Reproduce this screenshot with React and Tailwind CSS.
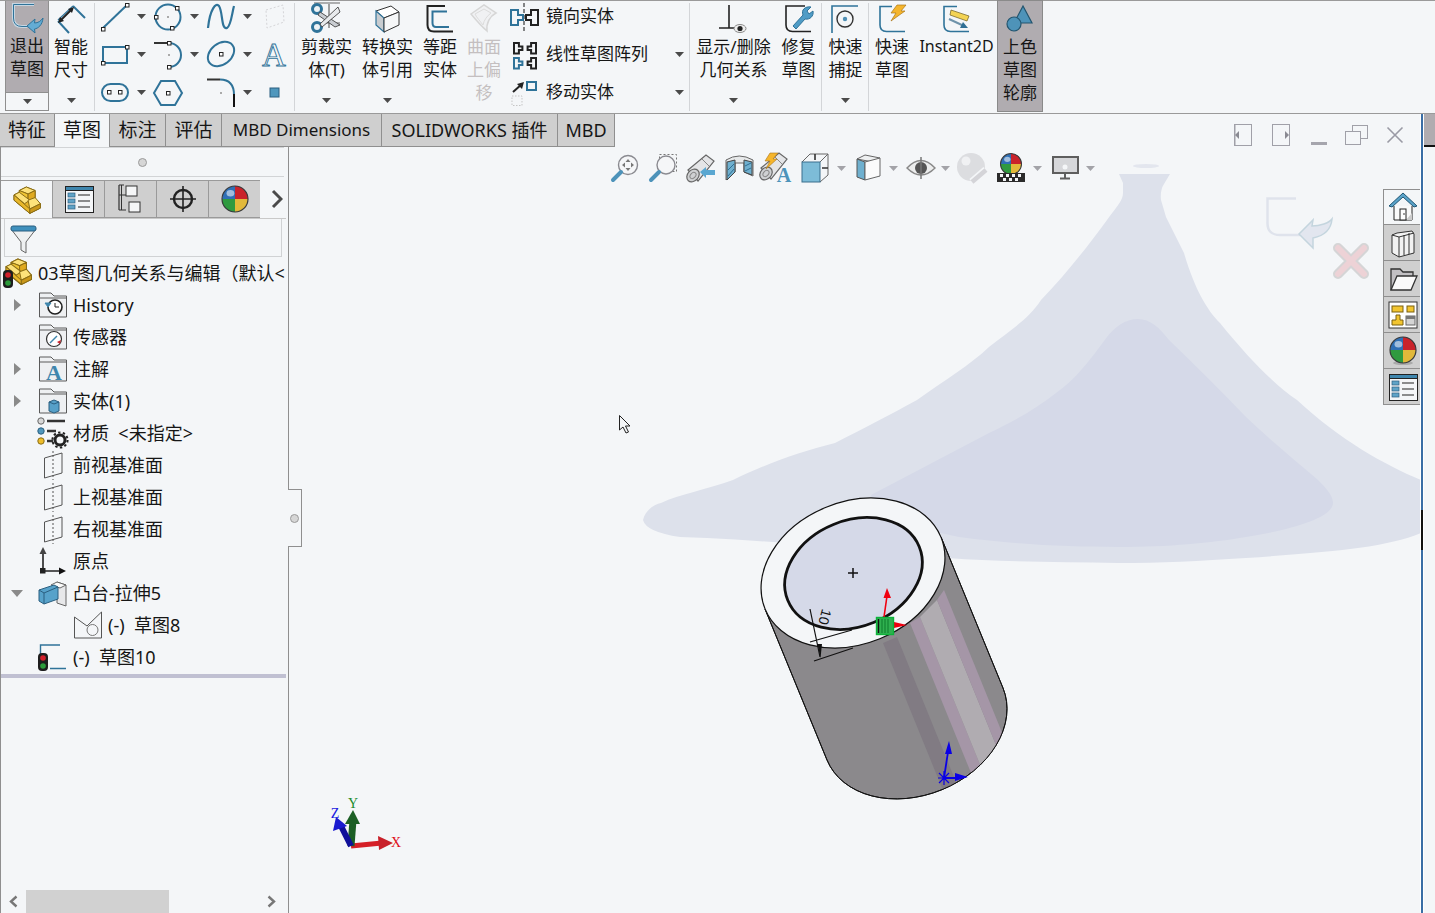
import React from "react";

const BL = "#2f7399";

const I = ({ x, y, w, h, children, className = "" }) => (
  <svg className={"block shrink-0 overflow-visible " + className} width={w} height={h} viewBox={`${x} ${y} ${w} ${h}`} fill="none">
    {children}
  </svg>
);

const H = ({ x, y }) => <rect x={x - 1.5} y={y - 1.5} width="3.5" height="3.5" fill="#fff" stroke="#222" strokeWidth="1" />;

const Caret = ({ light }) => (
  <svg className="block shrink-0" width="9" height="5" viewBox="0 0 9 5">
    <polygon points="0,0 9,0 4.5,5" fill={light ? "#a3a3a8" : "#4a4a4a"} />
  </svg>
);

const Sphere = ({ cx, cy, r }) => {
  const k = r * 0.05;
  return (
    <g>
      <circle cx={cx} cy={cy} r={r} fill="#2f6fb5" />
      <path d={`M${cx} ${cy}V${cy - r}A${r} ${r} 0 0 1 ${cx + r} ${cy}Z`} fill="#c9232b" />
      <path d={`M${cx} ${cy}H${cx + r}A${r} ${r} 0 0 1 ${cx} ${cy + r}Z`} fill="#e2b93a" />
      <path d={`M${cx} ${cy}V${cy + r}A${r} ${r} 0 0 1 ${cx - r} ${cy}Z`} fill="#2f9a3f" />
      <ellipse cx={cx - r * 0.35} cy={cy - r * 0.45} rx={r * 0.3} ry={r * 0.25} fill="#fff" opacity="0.55" />
      <circle cx={cx} cy={cy} r={r} stroke="#3a3a3a" strokeWidth={k + 0.5} />
    </g>
  );
};

const Part = ({ s = 1, tx = 0, ty = 0 }) => (
  <g transform={`translate(${tx} ${ty}) scale(${s})`} stroke="#8a6d16" strokeWidth={1 / s} strokeLinejoin="round">
    <polygon points="6,4 14,0 24,4 24,15 30,19 30,24 18,30 0,15 0,9 6,6" fill="#e5b429" />
    <polygon points="6,4 14,0 24,4 16,8" fill="#fde27a" />
    <polygon points="6,4 16,8 16,15 6,10" fill="#f0c534" />
    <polygon points="16,8 24,4 24,15 16,15" fill="#e0aa20" />
    <polygon points="0,9 6,6 18,15 12,19" fill="#fde27a" />
    <polygon points="16,15 24,12 30,19 18,25" fill="#fde27a" />
    <polygon points="0,9 18,25 18,30 0,15" fill="#e8b72a" />
    <polygon points="18,25 30,19 30,24 18,30" fill="#c9971a" />
  </g>
);

const Light = ({ x, y }) => (
  <g>
    <rect x={x} y={y} width="10" height="18" rx="4" fill="#1d1d1d" />
    <circle cx={x + 5} cy={y + 5} r="2.8" fill="#d21f2b" />
    <circle cx={x + 5} cy={y + 13} r="2.8" fill="#2c9a3a" />
  </g>
);

const Folder = ({ x, y, children }) => (
  <>
    <path d={`M${x + .5} ${y + 25}V${y + 1}H${x + 12}L${x + 15} ${y + 4}H${x + 27.5}V${y + 25}Z`} fill="#eef0f2" stroke="#5a5a5a" />
    <path d={`M${x + .5} ${y + 6}H${x + 27.5}`} stroke="#5a5a5a" />
    {children}
  </>
);

const ListIcon = ({ x, y, w = 28, h = 26 }) => (
  <g>
    <rect x={x + .5} y={y + .5} width={w} height={h} fill="#f4f6f8" stroke="#222" />
    <rect x={x + .5} y={y + .5} width={w} height="4" fill="#3f86ad" stroke="#222" />
    {[8, 14, 20].map((d) => (
      <g key={d}>
        <rect x={x + 3} y={y + d - 1} width="7" height="4" fill="#5fa3c7" stroke="#2f5f80" strokeWidth=".7" />
        <path d={`M${x + 13} ${y + d + 1}H${x + w - 3}`} stroke="#222" />
      </g>
    ))}
  </g>
);

const Plane = ({ y }) => (
  <I x={38} y={y} w={30} h={32}>
    <polygon points={`44.5,${y + 9} 62,${y + 4} 62,${y + 24} 44.5,${y + 29}`} fill="none" stroke="#555" />
    <path d={`M53 ${y + 2}V${y + 31}`} stroke="#555" strokeDasharray="2 2" />
  </I>
);

/* ---------- ribbon ---------- */

const RibbonBtn = ({ w, icon, lines, caret, disabled, active, small }) => (
  <div className={`flex h-[110px] flex-col items-center ${w} ${active ? "bg-[#b0acb0] outline outline-1 outline-[#8a8a8a]" : ""}`}>
    <div className="h-[34px] w-full shrink-0">{icon}</div>
    {lines.map((t) => (
      <div key={t} className={`whitespace-nowrap leading-[23px] ${small ? "text-[16px]" : "text-[17px]"} ${disabled ? "text-[#c4bfc0]" : "text-[#161616]"}`}>{t}</div>
    ))}
    {caret && <div className="mb-[8px] mt-auto"><Caret /></div>}
  </div>
);

const Sep = ({ className = "" }) => <div className={`my-[2px] h-[108px] w-px shrink-0 bg-[#d3d5d8] ${className}`} />;

const Cell = ({ children, caret }) => (
  <div className="flex h-[30px] items-center">
    {children}
    {caret && <div className="ml-[4px]"><Caret /></div>}
  </div>
);

const SketchGrid = () => (
  <div className="ml-[2px] grid w-[197px] shrink-0 grid-cols-[53px_53px_53px_38px] gap-y-[8px]">
    <Cell caret><I x={97} y={0} w={36} h={30}>
      <path d="M103 27L127 4" stroke={BL} strokeWidth="2" /><H x={103} y={28} /><H x={127} y={4} />
    </I></Cell>
    <Cell caret><I x={150} y={0} w={36} h={30}>
      <circle cx="168" cy="16" r="12.5" stroke={BL} strokeWidth="2" /><H x={156} y={16} /><H x={177} y={7} /><H x={172} y={27} />
      <path d="M167 15l2 2m0-2l-2 2" stroke="#aaa" />
    </I></Cell>
    <Cell caret><I x={203} y={0} w={36} h={30}>
      <path d="M208 27C210 8 216 1 219 5C223 11 221 29 227 27C231 25 232 12 234 5" stroke={BL} strokeWidth="2.2" />
    </I></Cell>
    <Cell><I x={256} y={0} w={36} h={30}>
      <polygon points="266,9 283,4 284,21 267,27" stroke="#d5d5d8" strokeDasharray="2 2" />
    </I></Cell>

    <Cell caret><I x={97} y={38} w={36} h={30}>
      <rect x="103" y="46" width="24" height="16" stroke={BL} strokeWidth="2" /><H x={127} y={46} /><H x={103} y={62} />
    </I></Cell>
    <Cell caret><I x={150} y={38} w={36} h={30}>
      <path d="M154 42H169" stroke="#333" strokeWidth="2" /><path d="M169 42A12 12 0 0 1 169 66" stroke={BL} strokeWidth="2" />
      <H x={169} y={42} /><H x={169} y={66} /><path d="M168 53l2 2m0-2l-2 2" stroke="#aaa" />
    </I></Cell>
    <Cell caret><I x={203} y={38} w={36} h={30}>
      <ellipse cx="221" cy="53" rx="14.5" ry="10.5" transform="rotate(-38 221 53)" stroke={BL} strokeWidth="2" /><H x={221} y={53} />
    </I></Cell>
    <Cell><I x={256} y={38} w={36} h={30}>
      <text x="274" y="65" textAnchor="middle" fontSize="33" fontFamily="'Liberation Serif',serif" fill="#f4f6f8" stroke={BL} strokeWidth=".9">A</text>
    </I></Cell>

    <Cell caret><I x={97} y={76} w={36} h={30}>
      <rect x="102" y="83" width="26" height="17" rx="8.5" stroke={BL} strokeWidth="2" /><H x={109} y={91} /><H x={120} y={91} />
    </I></Cell>
    <Cell><I x={150} y={76} w={36} h={30}>
      <polygon points="161,80 175,80 182,92 175,104 161,104 154,92" stroke={BL} strokeWidth="2" /><H x={168} y={92} />
    </I></Cell>
    <Cell caret><I x={203} y={76} w={36} h={30}>
      <path d="M207 78.5H220" stroke="#333" strokeWidth="2" /><path d="M220 78.5Q234 78.5 234 94" stroke={BL} strokeWidth="2" /><path d="M234 93V106" stroke="#111" strokeWidth="2" />
      <path d="M220 91l2 2m0-2l-2 2" stroke="#aaa" />
    </I></Cell>
    <Cell><I x={256} y={76} w={36} h={30}>
      <rect x="270" y="87" width="9" height="9" fill="#4f97bd" stroke="#2b5f80" />
    </I></Cell>
  </div>
);

const StackRow = ({ icon, label, caret }) => (
  <div className="flex h-[30px] items-center">
    <div className="w-[38px] shrink-0">{icon}</div>
    <div className="whitespace-nowrap text-[17px] leading-[30px] text-[#161616]">{label}</div>
    {caret && <div className="ml-auto mr-[5px]"><Caret /></div>}
  </div>
);

const bracket = (o, d, y, c, k = 1) => (
  <polygon
    points={`${o},${y} ${o + d * 7 * k},${y} ${o + d * 7 * k},${y + 5 * k} ${o + d * 12 * k},${y + 5 * k} ${o + d * 12 * k},${y + 10 * k} ${o + d * 7 * k},${y + 10 * k} ${o + d * 7 * k},${y + 15 * k} ${o},${y + 15 * k}`}
    stroke={c} strokeWidth="2" fill="#f4f6f8"
  />
);

const Ribbon = () => (
  <div className="flex h-[114px] shrink-0 items-start border-y border-[#9a9a9a] bg-[#f4f6f8] pl-[5px]">
    {/* exit */}
    <div className="h-[110px] w-[44px] shrink-0 border border-t-0 border-[#8f8f8f]">
      <div className="flex h-[91px] flex-col items-center bg-[#b0acb0]">
        <div className="h-[33px]">
          <I x={6} y={1} w={42} h={33}>
            <path d="M34 4.5H13.5V18Q13.5 26.5 22 26.5H27" stroke="#c6d6e2" strokeWidth="3" />
            <path d="M34 4.5H13.5V18Q13.5 26.5 22 26.5H27" stroke={BL} strokeWidth="1" />
            <path d="M27 26L35 19L34.5 23C38 23 41 21 43 18C42.5 25 38 28.5 34.5 29L35 33Z" fill="#63acd4" stroke={BL} />
          </I>
        </div>
        <div className="text-[17px] leading-[23px] text-[#161616]">退出</div>
        <div className="text-[17px] leading-[23px] text-[#161616]">草图</div>
      </div>
      <div className="flex h-[18px] items-center justify-center border-t border-[#8f8f8f]"><Caret /></div>
    </div>
    <div>
      <RibbonBtn w="w-[44px]" lines={["智能", "尺寸"]} caret icon={
        <I x={49} y={0} w={44} h={34}>
          <path d="M73 5L85 17" stroke={BL} strokeWidth="2" /><path d="M58 20L69 32" stroke={BL} strokeWidth="2" />
          <path d="M58 19L73 5" stroke={BL} strokeWidth="1.2" />
          <path d="M61 19L71 9" stroke="#222" strokeWidth="2" /><polygon points="58,22 64,20 60,16" fill="#222" /><polygon points="74,6 68,8 72,12" fill="#222" />
        </I>
      } />
    </div>
    <Sep className="ml-px" />
    <SketchGrid />
    <Sep />
    <div className="ml-[3px]">
      <RibbonBtn w="w-[57px]" lines={["剪裁实", "体(T)"]} caret icon={
        <I x={298} y={0} w={57} h={34}>
          <path d="M314 2H340M329 3V27M315 22H340" stroke="#666" strokeWidth="1.2" />
          <circle cx="317" cy="8" r="4.5" fill="#eef3f6" stroke={BL} strokeWidth="3" />
          <circle cx="317" cy="26" r="4.5" fill="#eef3f6" stroke={BL} strokeWidth="3" />
          <polygon points="320,11 340,24 335,26 318,14" fill="#c9cdd2" stroke="#444" strokeWidth=".9" />
          <polygon points="320,23 338,6 340,11 322,26" fill="#e8eaec" stroke="#444" strokeWidth=".9" />
        </I>
      } />
    </div>
    <div className="ml-[4px]">
      <RibbonBtn w="w-[57px]" lines={["转换实", "体引用"]} caret icon={
        <I x={359} y={0} w={57} h={34}>
          <polygon points="376,10 391,5 399,11 384,17" fill="#fff" stroke="#333" />
          <polygon points="376,10 384,17 384,31 376,24" fill="#c8ccd0" stroke={BL} strokeWidth="1.2" />
          <polygon points="384,17 399,11 399,24 384,31" fill="#f6f7f8" stroke="#333" />
        </I>
      } />
    </div>
    <div className="ml-[4px]">
      <RibbonBtn w="w-[40px]" lines={["等距", "实体"]} icon={
        <I x={420} y={0} w={40} h={34}>
          <path d="M445 5H427.5V24Q427.5 30.5 434 30.5H453" stroke="#222" strokeWidth="2" />
          <path d="M447 10.5H432.5V22Q432.5 26 436 26H449" stroke={BL} strokeWidth="2" />
        </I>
      } />
    </div>
    <div className="ml-[3px]">
      <RibbonBtn w="w-[42px]" disabled lines={["曲面", "上偏", "移"]} icon={
        <I x={463} y={0} w={42} h={34}>
          <path d="M471 13L484 4L496 12C490 15 486 22 487 30C481 25 476 19 471 13Z" stroke="#d6d6d6" strokeWidth="1.5" fill="#f0f1f3" />
          <path d="M475 13L484 8L491 12C487 15 484 19 483 24C480 20 477 17 475 13Z" stroke="#dcdcdc" />
        </I>
      } />
    </div>
    <div className="ml-[3px] flex w-[181px] shrink-0 flex-col gap-y-[8px]">
      <StackRow label="镜向实体" icon={
        <I x={508} y={0} w={38} h={30}>
          <path d="M524 2V31" stroke="#111" strokeDasharray="4 2" />
          {bracket(511, 1, 9, BL)}{bracket(538, -1, 9, "#222")}
        </I>
      } />
      <StackRow label="线性草图阵列" caret icon={
        <I x={508} y={38} w={38} h={30}>
          {bracket(514, 1, 42, "#222", 0.7)}
          {bracket(536, -1, 42, "#222", 0.7)}
          {bracket(514, 1, 57, BL, 0.7)}
          {bracket(536, -1, 57, "#222", 0.7)}
        </I>
      } />
      <StackRow label="移动实体" caret icon={
        <I x={508} y={76} w={38} h={30}>
          <path d="M513 91L522 83" stroke="#222" strokeWidth="2" /><polygon points="524,81 517,83 522,88" fill="#222" />
          <rect x="527" y="81" width="9" height="8" stroke={BL} strokeWidth="2" />
          <rect x="512" y="95" width="10" height="9.5" stroke="#c5c5c5" strokeDasharray="1.5 1.5" />
        </I>
      } />
    </div>
    <Sep />
    <div className="ml-[2px]">
      <RibbonBtn w="w-[83px]" lines={["显示/删除", "几何关系"]} caret icon={
        <I x={692} y={0} w={83} h={34}>
          <path d="M729 4V27M719 27H739" stroke="#222" strokeWidth="1.6" />
          <ellipse cx="740" cy="27.5" rx="6" ry="4" fill="#eee" stroke="#888" /><circle cx="740" cy="27.5" r="2.6" fill="#222" />
        </I>
      } />
    </div>
    <div className="ml-[2px]">
      <RibbonBtn w="w-[43px]" lines={["修复", "草图"]} icon={
        <I x={777} y={0} w={43} h={34}>
          <path d="M805 5H786V24Q786 30.5 792.5 30.5H811" stroke="#222" strokeWidth="1.6" />
          <path d="M793 25L803 14C801 9 805 5 811 6L807 10L809 13L813 10C814 15 810 19 805 18L796 28Z" fill="#4f9cc6" stroke={BL} />
        </I>
      } />
    </div>
    <Sep className="ml-px" />
    <div className="ml-[2px]">
      <RibbonBtn w="w-[43px]" lines={["快速", "捕捉"]} caret icon={
        <I x={824} y={0} w={43} h={34}>
          <path d="M832 32V5H858" stroke={BL} strokeWidth="1.6" />
          <circle cx="845" cy="18" r="8" stroke="#333" strokeWidth="1.4" /><circle cx="845" cy="18" r="2.2" fill="#4f8fb5" />
        </I>
      } />
    </div>
    <Sep className="ml-px" />
    <div className="ml-[1px]">
      <RibbonBtn w="w-[44px]" lines={["快速", "草图"]} icon={
        <I x={870} y={0} w={44} h={34}>
          <path d="M892 5.5H880V24Q880 30.5 886.5 30.5H905" stroke={BL} strokeWidth="1.6" />
          <polygon points="897,4 906,4 901,10 905,10 891,20 896,12 891,12" fill="#f5b52c" stroke="#a9751b" strokeWidth=".7" />
        </I>
      } />
    </div>
    <div className="ml-[3px]">
      <RibbonBtn w="w-[79px]" small lines={["Instant2D"]} icon={
        <I x={917} y={0} w={79} h={34}>
          <path d="M957 5.5H944V24Q944 30.5 950.5 30.5H969" stroke={BL} strokeWidth="1.6" />
          <polygon points="951,9 969,15 967,20 950,14" fill="#f3d354" stroke="#6b5c20" strokeWidth=".7" />
          <path d="M949 18L964 25" stroke="#6f93aa" strokeWidth="2" /><polygon points="968,27 960,27 963,21" fill="#2f6f94" />
        </I>
      } />
    </div>
    <div className="ml-[2px]">
      <RibbonBtn w="w-[44px]" active lines={["上色", "草图", "轮廓"]} icon={
        <I x={998} y={0} w={44} h={34}>
          <polygon points="1023,5 1032,22 1014,22" fill="#4e93b9" stroke="#23556f" strokeWidth="1.2" />
          <circle cx="1014" cy="23" r="7" fill="#4e93b9" stroke="#23556f" strokeWidth="1.2" />
        </I>
      } />
    </div>
  </div>
);

/* ---------- tabs ---------- */

const Tab = ({ w, children, active }) => (
  <div className={`flex h-full shrink-0 items-center justify-center whitespace-nowrap border-r border-[#8f8f8f] text-[#161616] ${w} ${active ? "bg-[#f4f6f8]" : "border-b bg-[#cfcfcf]"}`}>
    {children}
  </div>
);

const TabRow = () => (
  <div className="flex h-[33px] shrink-0 items-center bg-[#f4f6f8]">
    <Tab w="w-[55px] text-[19px]">特征</Tab>
    <Tab w="w-[55px] text-[19px]" active>草图</Tab>
    <Tab w="w-[56px] text-[19px]">标注</Tab>
    <Tab w="w-[56px] text-[19px]">评估</Tab>
    <Tab w="w-[160px] text-[17px]">MBD Dimensions</Tab>
    <Tab w="w-[176px] text-[18px]">SOLIDWORKS 插件</Tab>
    <Tab w="w-[57px] text-[18px]">MBD</Tab>
    <div className="ml-[619px] mt-[9px]">
      <I x={1234} y={124} w={18} h={22}>
        <rect x="1234.5" y="124.5" width="17" height="21" stroke="#a0a0a8" /><path d="M1235 124V146" stroke="#a0a0a8" /><polygon points="1239,131 1239,139 1235,135" fill="#8a8a92" />
      </I>
    </div>
    <div className="ml-[20px] mt-[9px]">
      <I x={1272} y={124} w={18} h={22}>
        <rect x="1272.5" y="124.5" width="17" height="21" stroke="#a0a0a8" /><polygon points="1285,131 1285,139 1289,135" fill="#8a8a92" />
      </I>
    </div>
    <div className="ml-[21px] mt-[26px] h-[3px] w-[16px] bg-[#a5a5ad]" />
    <div className="ml-[18px] mt-[9px]">
      <I x={1345} y={125} w={23} h={20}>
        <rect x="1352.5" y="125.5" width="15" height="13" stroke="#a0a0a8" /><rect x="1345.5" y="131.5" width="15" height="13" fill="#f4f6f8" stroke="#a0a0a8" />
      </I>
    </div>
    <div className="ml-[19px] mt-[9px]">
      <I x={1387} y={127} w={16} h={16}>
        <path d="M1387.5 127.5L1402.5 142.5M1402.5 127.5L1387.5 142.5" stroke="#9a9aa5" strokeWidth="1.6" />
      </I>
    </div>
    <div className="ml-auto h-full w-[11px] border-b-2 border-[#111] bg-[#b0acb0]" />
  </div>
);

/* ---------- feature manager ---------- */

const PTab = ({ active, children, w = "w-[52px]" }) => (
  <div className={`flex h-[38px] shrink-0 items-center justify-center border-t border-[#9a9a9a] ${w} ${active ? "bg-[#f4f6f8]" : "border-b border-l bg-[#cfcfcf]"}`}>
    {children}
  </div>
);

const Row = ({ arrow, icon, label }) => (
  <div className="flex h-[32px] items-center whitespace-nowrap text-[18px] text-[#161616]">
    <div className="flex w-[37px] shrink-0 justify-center pr-[5px]">
      {arrow === "r" && <svg width="7" height="12" viewBox="0 0 7 12"><polygon points="0,0 7,6 0,12" fill="#8a8a8a" /></svg>}
      {arrow === "d" && <svg width="12" height="7" viewBox="0 0 12 7"><polygon points="0,0 12,0 6,7" fill="#8a8a8a" /></svg>}
    </div>
    <div className="w-[35px] shrink-0">{icon}</div>
    <span>{label}</span>
  </div>
);

const TreeIcon = ({ y, children }) => <I x={38} y={y} w={30} h={32}>{children}</I>;

const Tree = () => (
  <div className="flex flex-col">
    <div className="flex h-[32px] items-center overflow-hidden whitespace-nowrap text-[18px] text-[#161616]">
      <div className="w-[36px] shrink-0">
        <I x={1} y={257} w={36} h={32}>
          <Part s={0.85} tx={6} ty={259} />
          <Light x={3} y={270} />
        </I>
      </div>
      <span className="ml-px">03草图几何关系与编辑（默认&lt;</span>
    </div>
    <Row arrow="r" label="History" icon={
      <TreeIcon y={289}>
        <Folder x={39} y={292}>
          <circle cx="55" cy="307" r="7" fill="#fff" stroke="#222" strokeWidth="1.6" />
          <path d="M55 303V307H59" stroke="#222" /><path d="M48 307L45 303L51 303Z" fill="#3f86ad" stroke="#3f86ad" />
        </Folder>
      </TreeIcon>
    } />
    <Row label="传感器" icon={
      <TreeIcon y={321}>
        <Folder x={39} y={324}>
          <circle cx="54" cy="339" r="7.5" fill="#fff" stroke="#333" strokeWidth="1.2" />
          <path d="M50 343L57 336" stroke="#3f86ad" strokeWidth="1.5" /><path d="M57 342L61 340L60 344Z" fill="#c9232b" />
        </Folder>
      </TreeIcon>
    } />
    <Row arrow="r" label="注解" icon={
      <TreeIcon y={353}>
        <Folder x={39} y={356}>
          <text x="54" y="380" textAnchor="middle" fontSize="22" fontWeight="700" fontFamily="'Liberation Serif',serif" fill="#3f86ad">A</text>
        </Folder>
      </TreeIcon>
    } />
    <Row arrow="r" label="实体(1)" icon={
      <TreeIcon y={385}>
        <Folder x={39} y={388}>
          <path d="M49 402L54 400L59 402V411L54 413L49 411Z" fill="#56a0c8" stroke="#2b5f80" /><path d="M49 402L54 404L59 402" stroke="#2b5f80" />
        </Folder>
      </TreeIcon>
    } />
    <Row label={"材质\u00A0 <未指定>"} icon={
      <TreeIcon y={417}>
        <circle cx="41" cy="421" r="3.2" fill="#d7d7d7" stroke="#666" />
        <circle cx="41" cy="431" r="3.2" fill="#4f97bd" stroke="#2b5f80" />
        <circle cx="41" cy="441" r="3.2" fill="#eebd2a" stroke="#8a6d16" />
        <path d="M47 421H65M47 431H56M47 441H53" stroke="#333" strokeWidth="2.4" />
        <circle cx="60" cy="440" r="5" fill="#f4f6f8" stroke="#222" strokeWidth="3" />
        <circle cx="60" cy="440" r="7.6" stroke="#222" strokeWidth="2" strokeDasharray="2.4 2.4" />
      </TreeIcon>
    } />
    <Row label="前视基准面" icon={<Plane y={449} />} />
    <Row label="上视基准面" icon={<Plane y={481} />} />
    <Row label="右视基准面" icon={<Plane y={513} />} />
    <Row label="原点" icon={
      <TreeIcon y={545}>
        <path d="M43 571V552M43 571H62" stroke="#222" strokeWidth="1.6" />
        <polygon points="43,547 39.5,554 46.5,554" fill="#444" /><polygon points="66,571 59,567.5 59,574.5" fill="#111" />
        <rect x="40" y="568" width="5.5" height="5.5" fill="#222" />
      </TreeIcon>
    } />
    <Row arrow="d" label="凸台-拉伸5" icon={
      <TreeIcon y={577}>
        <polygon points="57,582 66,585 66,606 57,603" fill="#e7e8ea" stroke="#666" />
        <polygon points="51,585 57,582 66,585 60,588" fill="#fafafa" stroke="#666" />
        <polygon points="39,590 54,585 58,587 58,599 44,604 39,601" fill="#57a2ca" stroke="#2b5f80" />
        <path d="M39 590L44 593L58 587M44 593V604" stroke="#2b5f80" />
      </TreeIcon>
    } />
    <div className="flex h-[32px] items-center whitespace-nowrap text-[18px] text-[#161616]">
      <div className="ml-[73px] w-[34px] shrink-0">
        <I x={74} y={609} w={34} h={32}>
          <path d="M74.5 617L87 626L101.5 612V638H74.5Z" stroke="#555" /><circle cx="92.5" cy="630" r="5.5" stroke="#777" />
        </I>
      </div>
      <span>{"(-)\u00A0 草图8"}</span>
    </div>
    <Row label={"(-)\u00A0 草图10"} icon={
      <TreeIcon y={641}>
        <path d="M60 645H40.5V655M50 668.5H66" stroke={BL} strokeWidth="1.4" />
        <Light x={38} y={653} />
      </TreeIcon>
    } />
    <div className="mt-px h-[4px] w-[285px] bg-[#c0c0d2]" />
  </div>
);

const LeftPanel = () => (
  <div className="relative flex w-[289px] shrink-0 flex-col border-x border-[#8f8f8f] bg-[#f4f6f8]">
    <div className="mr-[4px] flex h-[30px] shrink-0 items-center justify-center border-y border-[#d2d4d6]">
      <div className="h-[9px] w-[9px] rounded-full border border-[#9a9a9a] bg-[#d6d6d6]" />
    </div>
    <div className="mr-[2px] mt-[3px] flex h-[39px] shrink-0 items-start border-b border-[#c9c9c9]">
      <PTab active w="w-[51px]">
        <I x={0} y={0} w={30} h={30}><Part s={0.88} tx={2} ty={2} /></I>
      </PTab>
      <PTab><I x={0} y={0} w={30} h={30}><ListIcon x={1} y={2} /></I></PTab>
      <PTab>
        <I x={0} y={0} w={30} h={30}>
          <path d="M3 1H8M3 1V26M3 11H10M3 26H10" stroke="#333" strokeWidth="1.2" />
          <path d="M5.5 1V26" stroke="#333" />
          <rect x="10" y="2" width="11" height="10" fill="#f5f6f7" stroke="#333" />
          <rect x="13" y="18" width="11" height="10" fill="#f5f6f7" stroke="#333" />
        </I>
      </PTab>
      <PTab>
        <I x={0} y={0} w={30} h={30}>
          <circle cx="15" cy="15" r="9" stroke="#222" strokeWidth="2.4" />
          <path d="M15 2V28M2 15H28" stroke="#222" strokeWidth="1.6" />
        </I>
      </PTab>
      <PTab><I x={0} y={0} w={30} h={30}><Sphere cx={15} cy={15} r={13} /></I></PTab>
      <div className="ml-[11px] mt-[9px]">
        <svg width="12" height="20" viewBox="0 0 12 20"><path d="M2 2L10 10L2 18" stroke="#4a4a4a" strokeWidth="3" fill="none" /></svg>
      </div>
    </div>
    <div className="mx-[3px] h-[38px] w-[278px] shrink-0 border border-t-0 border-[#d0d2d4] pl-[5px] pt-[6px]">
      <I x={0} y={0} w={28} h={30}>
        <path d="M1 4H26L16 17V28L11 25V17Z" fill="#eef0f1" stroke="#666" />
        <rect x="1" y="1" width="25" height="5" rx="2" fill="#3f90bd" stroke="#2b5f80" />
      </I>
    </div>
    <Tree />
    <div className="mt-auto flex h-[23px] shrink-0 items-center">
      <div className="flex w-[25px] justify-center">
        <svg width="9" height="13" viewBox="0 0 9 13"><path d="M7.5 1.5L2 6.5L7.5 11.5" stroke="#777" strokeWidth="2.4" fill="none" /></svg>
      </div>
      <div className="h-full w-[143px] bg-[#d1d1d1]" />
      <div className="ml-[98px] flex w-[9px]">
        <svg width="9" height="13" viewBox="0 0 9 13"><path d="M1.5 1.5L7 6.5L1.5 11.5" stroke="#777" strokeWidth="2.4" fill="none" /></svg>
      </div>
    </div>
  </div>
);

/* ---------- viewport ---------- */

const VB = ({ cx, ml, children }) => (
  <div className={ml}>
    <I x={cx - 18} y={152} w={36} h={32}>{children}</I>
  </div>
);

const Binocular = () => (
  <g>
    <polygon points="688,170 706,155 714,161 698,181" fill="#e4e5e7" stroke="#666" strokeWidth="1.2" />
    <path d="M702 159L709 166" stroke="#888" />
    <ellipse cx="693" cy="175.5" rx="5.5" ry="7" transform="rotate(42 693 175.5)" fill="#cfd1d3" stroke="#666" strokeWidth="1.2" />
    <ellipse cx="693" cy="175.5" rx="2.5" ry="3.5" transform="rotate(42 693 175.5)" stroke="#888" />
  </g>
);

const ViewToolbar = () => (
  <div className="absolute left-[318px] top-[5px] flex items-center">
    <VB cx={625}>
      <circle cx="628" cy="165" r="9.5" fill="#f5f6f8" stroke="#8a8a90" strokeWidth="1.4" />
      <path d="M621 172L613 180" stroke="#4d93ba" strokeWidth="4" strokeLinecap="round" />
      <path d="M628 159l2.5 3h-5zM628 171l2.5-3h-5zM622 165l3-2.5v5zM634 165l-3-2.5v5z" fill="#777" />
    </VB>
    <VB cx={663} ml="ml-[2px]">
      <rect x="659.5" y="154.5" width="17" height="17" stroke="#777" strokeDasharray="2 2" />
      <circle cx="666" cy="165" r="9" fill="#f5f6f8" stroke="#8a8a90" strokeWidth="1.4" />
      <path d="M659 172L651 180" stroke="#4d93ba" strokeWidth="4" strokeLinecap="round" />
    </VB>
    <VB cx={702} ml="ml-[3px]">
      <Binocular />
      <polygon points="700,172 706,167 706,170 715,170 715,175 706,175 706,178" fill="#5aa7d1" />
    </VB>
    <VB cx={739} ml="ml-px">
      <path d="M726 160Q739 152 753 160V176L744 172V163H735V172L726 180Z" fill="#e7e9ea" stroke="#666" />
      <polygon points="727,162 735,160 735,172 727,180" fill="#6fb0cf" stroke="#444" />
      <polygon points="744,160 752,162 752,175 744,172" fill="#6fb0cf" stroke="#444" />
      <path d="M728 170L734 164M728 176L734 169M745 166L751 163M745 171L751 168" stroke="#2f6f94" />
    </VB>
    <VB cx={777} ml="ml-[2px]">
      <g transform="translate(73 -2)"><Binocular /></g>
      <polygon points="770,153 778,153 773,159 777,159 766,169 770,161 765,161" fill="#f5b52c" stroke="#a9751b" strokeWidth=".6" />
      <text x="784" y="182" textAnchor="middle" fontSize="20" fontWeight="700" fontFamily="'Liberation Serif',serif" fill="#4d93ba">A</text>
    </VB>
    <VB cx={815} ml="ml-[2px]">
      <path d="M802 162L810 154H828V175L820 182" stroke="#666" /><path d="M820 162L828 154" stroke="#666" />
      <rect x="802" y="162" width="18" height="20" fill="#7dbcd8" stroke="#3b6f8d" />
      <path d="M815 154V160M828 168H822" stroke="#333" strokeWidth="1.6" />
    </VB>
    <div className="ml-[4px]"><Caret light /></div>
    <VB cx={868} ml="ml-[4px]">
      <polygon points="857,159 865,155 880,158 873,162" fill="#eef0f1" stroke="#666" />
      <polygon points="857,159 865,162 865,180 857,177" fill="#6fb0cf" stroke="#555" />
      <polygon points="865,162 880,158 880,176 865,180" fill="#fbfbfb" stroke="#666" />
    </VB>
    <div className="ml-[3px]"><Caret light /></div>
    <VB cx={920} ml="ml-[4px]">
      <path d="M907 168Q921 153 935 168Q921 182 907 168Z" fill="#eceded" stroke="#888" strokeWidth="1.4" />
      <circle cx="921" cy="168" r="6" fill="#555" />
      <path d="M921 157V179" stroke="#777" strokeWidth="1.5" />
    </VB>
    <div className="ml-[3px]"><Caret light /></div>
    <VB cx={973} ml="ml-[4px]">
      <circle cx="972" cy="167" r="14" fill="#dcdde0" />
      <circle cx="967" cy="161" r="4.5" fill="#f0f1f3" />
      <path d="M973 182L987 170" stroke="#f4f6f8" strokeWidth="8" /><path d="M973 182L987 170" stroke="#d4d4d8" strokeWidth="4.5" />
    </VB>
    <VB cx={1012} ml="ml-[3px]">
      <Sphere cx={1012} cy={164} r={10.5} />
      <rect x="998" y="173" width="28" height="9" fill="#2b2b2b" />
      <path d="M1001 174v3h3v-3zM1007 174v3h3v-3zM1013 174v3h3v-3zM1019 174v3h3v-3zM1004 178v3h3v-3zM1010 178v3h3v-3zM1016 178v3h3v-3z" fill="#f4f6f8" />
    </VB>
    <div className="ml-[4px]"><Caret light /></div>
    <VB cx={1065} ml="ml-[5px]">
      <rect x="1053" y="157" width="25" height="16" fill="#d6d7da" stroke="#5e5e5e" strokeWidth="2" />
      <circle cx="1065" cy="167" r="2.5" fill="#f4f6f8" />
      <path d="M1065 173V178M1060 178.5H1070" stroke="#5e5e5e" strokeWidth="2" />
    </VB>
    <div className="ml-[3px]"><Caret light /></div>
  </div>
);

const TaskBtn = ({ active, children }) => (
  <div className={`flex items-center justify-center border-b border-[#8f8f8f] ${active ? "h-[35px] bg-[#f4f6f8]" : "h-[36px] bg-[#cfcfcf]"}`}>
    <svg className="block" width="30" height="30" viewBox="0 0 30 30" fill="none">{children}</svg>
  </div>
);

const TaskPane = () => (
  <div className="absolute left-[1094px] top-[42px] w-[40px] border-x border-t border-[#8f8f8f]">
    <TaskBtn active>
      <path d="M1 14L15 1L29 14L26 15L15 5L4 15Z" fill="#5aa2c8" stroke="#1f5674" />
      <path d="M6 14V28H24V14" stroke="#222" fill="#fafafa" />
      <polygon points="18,28 24,21 24,28" fill="#ccc" />
      <rect x="12" y="17" width="6" height="11" fill="#fff" stroke="#222" /><circle cx="16" cy="22" r=".8" fill="#222" />
    </TaskBtn>
    <TaskBtn>
      <polygon points="4,7 9,5 24,3 26,6 26,25 11,29 4,25" fill="#f2f2f2" stroke="#333" />
      <path d="M11 9V29M16 7V27M21 5V26M4 7L11 9L26 5" stroke="#333" />
    </TaskBtn>
    <TaskBtn>
      <path d="M3 26V5H12L15 8H25V12" fill="#c2c0c3" stroke="#333" strokeWidth="1.3" />
      <polygon points="3,26 9,12 29,12 23,26" fill="#fafafa" stroke="#333" strokeWidth="1.3" />
    </TaskBtn>
    <TaskBtn>
      <rect x="1" y="2" width="28" height="26" fill="#fff" stroke="#333" />
      <rect x="4" y="6" width="11" height="6" fill="#f2c530" stroke="#7a6010" />
      <rect x="19" y="6" width="7" height="6" fill="#f2c530" stroke="#7a6010" />
      <polygon points="8,15 12,15 12,20 15,20 15,25 4,25 4,20 8,20" fill="#f2c530" stroke="#7a6010" />
      <rect x="18" y="16" width="9" height="9" fill="#d5d5d5" stroke="#666" /><rect x="18" y="16" width="9" height="3" fill="#777" />
    </TaskBtn>
    <TaskBtn>
      <ellipse cx="15" cy="27" rx="10" ry="2" fill="#aaa" />
      <Sphere cx={15} cy={14} r={13} />
    </TaskBtn>
    <TaskBtn><ListIcon x={1} y={2} /></TaskBtn>
  </div>
);

const BODY = "M765 609L827 760A95 71 -22.2 0 0 1003 688L941 537Z";

const Graphics = () => (
  <svg className="absolute inset-0" width="1146" height="766" viewBox="289 147 1146 766" fill="none">
    <defs>
      <clipPath id="body"><path d={BODY} /></clipPath>
    </defs>
    {/* background watermark */}
    <path d="M1119 174H1170L1164 184Q1160 190 1161 200L1166 217L1184 253C1195 290 1207 310 1220 323C1250 360 1275 385 1297 400C1340 440 1385 465 1421 480V533C1385 548 1330 552 1246 558C1200 561 1160 563 1118 563C1060 562 1000 562 948 558C860 548 780 542 707 538L680 537Q646 532 643 520C645 510 655 504 661 503C680 494 705 490 733 480C770 462 800 452 835 443C860 430 890 415 917 400C945 380 970 365 989 347C1010 330 1028 320 1041 300C1065 275 1085 250 1107 220C1118 205 1123 200 1123 193V183Z" fill="#dde1eb" />
    <ellipse cx="1146" cy="166" rx="13" ry="2" fill="#e3e6ee" />
    <path d="M1138 319C1125 319 1115 327 1107 337C1090 360 1075 380 1056 393C1035 410 1010 423 989 433L871 495L880 520L959 537C1020 545 1070 547 1118 547C1170 547 1210 543 1246 537C1290 530 1333 518 1333 503C1333 495 1325 487 1318 480C1295 460 1270 440 1246 417C1220 390 1195 365 1169 340C1160 328 1150 319 1138 319Z" fill="#d5d9e8" />

    {/* cylinder */}
    <path d={BODY} fill="#8b898c" stroke="#111" strokeWidth="1" />
    <g clipPath="url(#body)">
      <polygon points="883,643 897,637 967,809 953,815" fill="#817b83" />
      <polygon points="910,623 920,617 990,789 980,795" fill="#a596a7" />
      <polygon points="920,617 937,600 1007,772 990,789" fill="#b0acb1" />
      <polygon points="937,600 944,590 1014,762 1007,772" fill="#a596a7" />
    </g>
    <path d="M765 609L827 760A95 71 -22.2 0 0 1003 688L941 537" stroke="#111" strokeWidth="1" />
    <ellipse cx="853" cy="573" rx="95" ry="71" transform="rotate(-22.2 853 573)" fill="#f4f6f8" stroke="#111" strokeWidth="1.2" />
    <ellipse cx="853.5" cy="573.5" rx="71" ry="53" transform="rotate(-22.2 853.5 573.5)" fill="#d5d9e8" stroke="#111" strokeWidth="2.8" />
    <path d="M848 573H858M853 568V578" stroke="#111" strokeWidth="1.5" />

    {/* dimension */}
    <path d="M810 642L852 630M814 661L853 648M810 609L820 657" stroke="#111" strokeWidth="1.2" />
    <polygon points="817.5,644 822,644 820.5,658" fill="#111" />
    <text x="825" y="622" textAnchor="middle" fontSize="14" fill="#111" transform="rotate(105 825 617)" fontFamily="'Liberation Sans',sans-serif">10</text>

    {/* triads */}
    <path d="M884 617L887 596" stroke="#f0000f" strokeWidth="1.6" />
    <polygon points="887,588 883.5,598 891,598" fill="#f0000f" />
    <polygon points="907,625 894,622 894,628" fill="#f0000f" />
    <rect x="876.5" y="617.5" width="17" height="17" fill="#30b050" stroke="#0db33a" strokeWidth="1.4" />
    <path d="M878.5 619V633" stroke="#111" strokeWidth="1.4" />
    <path d="M882 619V633M885 619V633M888 619V633" stroke="#0a7a2a" />

    <path d="M944 778L948 752M944 778H962" stroke="#0a00e6" strokeWidth="1.8" />
    <polygon points="949,741 945,754 952,754" fill="#0a00e6" />
    <polygon points="968,777 955,773 955,781" fill="#0a00e6" />
    <path d="M939 773L949 783M949 773L939 783M944 771V785M938 778H950" stroke="#0a00e6" strokeWidth="1.2" />

    {/* cursor */}
    <path d="M619.5 415.5V430L623 427L626 433L628.5 432L625.5 426H630Z" fill="#f4f6f8" stroke="#222" />

    {/* ghost confirm */}
    <path d="M1296 198.5H1267.5V222Q1267 235 1280 235H1300" stroke="#dfe3ec" strokeWidth="2.5" />
    <path d="M1299 234L1313 220L1312 226C1320 226 1329 223 1332 219C1331 230 1323 236 1313 238L1313 248Z" fill="#e2e6ef" stroke="#c4d5de" strokeWidth="1.5" />
    <path d="M1338 248L1364 274M1364 248L1338 274" stroke="#d5d5d6" strokeWidth="10" strokeLinecap="round" />
    <path d="M1338 248L1364 274M1364 248L1338 274" stroke="#edd2d6" strokeWidth="6" strokeLinecap="round" />

    {/* reference triad */}
    <path d="M351 846L382 843" stroke="#d51f27" strokeWidth="5" />
    <polygon points="393,843 378,836 379,850" fill="#c8202a" />
    <path d="M351 846L353 820" stroke="#1c5f25" strokeWidth="7" />
    <polygon points="353,810 345,824 360,824" fill="#1c5f25" />
    <path d="M351 846L340 824" stroke="#10109a" strokeWidth="6" />
    <polygon points="336,817 333,831 347,826" fill="#1a1ad0" />
    <text x="396" y="847" textAnchor="middle" fontSize="14" fontFamily="'Liberation Serif',serif" fill="#e0101a">X</text>
    <text x="353" y="808" textAnchor="middle" fontSize="14" fontFamily="'Liberation Serif',serif" fill="#1a8a2a">Y</text>
    <text x="335" y="818" textAnchor="middle" fontSize="14" fontFamily="'Liberation Serif',serif" fill="#1a1ae0">Z</text>
  </svg>
);

const Viewport = () => (
  <div className="relative min-w-0 flex-1 overflow-hidden bg-[#f4f6f8]">
    <Graphics />
    <ViewToolbar />
    <TaskPane />
  </div>
);

export default function App() {
  return (
    <div className="relative flex h-[913px] w-[1435px] flex-col overflow-hidden bg-[#f4f6f8] font-['Noto_Sans','Noto_Sans_CJK_SC',sans-serif]">
      <Ribbon />
      <TabRow />
      <div className="flex min-h-0 flex-1">
        <LeftPanel />
        <Viewport />
      </div>
      <div className="absolute bottom-0 left-[1420px] top-[114px] w-[4px] border-x border-white bg-[#3a6ea5]" />
      <div className="absolute left-[1421px] top-[510px] h-[40px] w-[2px] bg-[#111]" />
      <div className="absolute left-[288px] top-[489px] flex h-[58px] w-[14px] items-center justify-center border border-l-0 border-[#8f8f8f] bg-[#f4f6f8]">
        <div className="h-[9px] w-[9px] rounded-full border border-[#9a9a9a] bg-[#d6d6d6]" />
      </div>
    </div>
  );
}
